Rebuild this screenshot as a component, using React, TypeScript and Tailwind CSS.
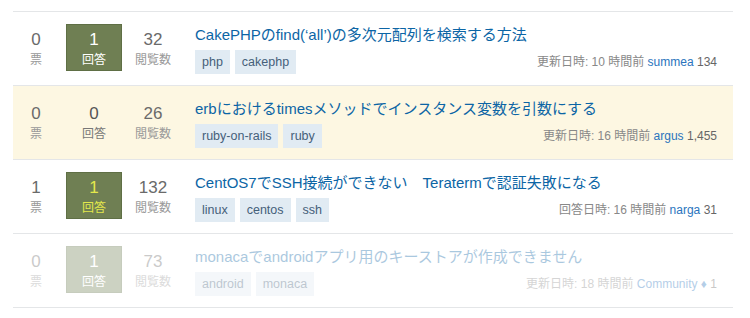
import React from "react";

type Question = {
  votes: number;
  answers: number;
  accepted: boolean;
  views: number;
  title: string;
  tags: string[];
  action: string;
  ago: string;
  user: string;
  mod?: boolean;
  rep: string;
  highlight?: boolean;
  faded?: boolean;
};

const questions: Question[] = [
  {
    votes: 0,
    answers: 1,
    accepted: false,
    views: 32,
    title: "CakePHPのfind(‘all’)の多次元配列を検索する方法",
    tags: ["php", "cakephp"],
    action: "更新日時",
    ago: "10 時間前",
    user: "summea",
    rep: "134",
  },
  {
    votes: 0,
    answers: 0,
    accepted: false,
    views: 26,
    title: "erbにおけるtimesメソッドでインスタンス変数を引数にする",
    tags: ["ruby-on-rails", "ruby"],
    action: "更新日時",
    ago: "16 時間前",
    user: "argus",
    rep: "1,455",
    highlight: true,
  },
  {
    votes: 1,
    answers: 1,
    accepted: true,
    views: 132,
    title: "CentOS7でSSH接続ができない　Teratermで認証失敗になる",
    tags: ["linux", "centos", "ssh"],
    action: "回答日時",
    ago: "16 時間前",
    user: "narga",
    rep: "31",
  },
  {
    votes: 0,
    answers: 1,
    accepted: false,
    views: 73,
    title: "monacaでandroidアプリ用のキーストアが作成できません",
    tags: ["android", "monaca"],
    action: "更新日時",
    ago: "18 時間前",
    user: "Community",
    mod: true,
    rep: "1",
    faded: true,
  },
];

function Stat({ value, label }: { value: number; label: string }) {
  return (
    <div className="flex flex-col items-center">
      <span className="text-[17px] leading-[20px] text-[#6a6a6a]">{value}</span>
      <span className="mt-[3px] text-[12px] leading-[14px] text-[#999]">{label}</span>
    </div>
  );
}

function QuestionRow({ q }: { q: Question }) {
  return (
    <div
      className={`flex h-[74px] border-b border-[#e4e6e8] ${
        q.highlight ? "bg-[#fdf7e2]" : "bg-white"
      }`}
    >
      <div className={`flex w-full pt-[12px] ${q.faded ? "opacity-[0.35]" : ""}`}>
        {/* stats */}
        <div className="flex w-[182px] shrink-0">
          <div className="flex w-[46px] justify-center pt-[6px]">
            <Stat value={q.votes} label="票" />
          </div>
          {q.answers > 0 ? (
            <div className="ml-[7px] flex h-[47px] w-[56px] flex-col items-center border border-[#5f6f45] bg-[#6f7f53] pt-[5px]">
              <span
                className={`text-[17px] leading-[20px] ${
                  q.accepted ? "text-[#e3e84c]" : "text-white"
                }`}
              >
                {q.answers}
              </span>
              <span
                className={`mt-[3px] text-[12px] leading-[14px] ${
                  q.accepted ? "text-[#e3e84c]" : "text-white"
                }`}
              >
                回答
              </span>
            </div>
          ) : (
            <div className="ml-[7px] flex h-[47px] w-[56px] flex-col items-center pt-[6px]">
              <span className="text-[17px] leading-[20px] text-[#555]">0</span>
              <span className="mt-[3px] text-[12px] leading-[14px] text-[#777]">回答</span>
            </div>
          )}
          <div className="flex w-[62px] justify-center pt-[6px]">
            <Stat value={q.views} label="閲覧数" />
          </div>
        </div>

        {/* summary */}
        <div className="flex flex-1 flex-col pr-[16px]">
          <a className="pt-[1px] text-[15px] leading-[20px] text-[#0c65a5]">{q.title}</a>
          <div className="mt-[5px] flex items-center justify-between">
            <div className="flex gap-[5px]">
              {q.tags.map((t) => (
                <span
                  key={t}
                  className="flex h-[24px] items-center bg-[#e1ebf3] px-[7px] text-[12.5px] text-[#45607a]"
                >
                  {t}
                </span>
              ))}
            </div>
            <div className="text-[12px] text-[#888]">
              {q.action}: {q.ago} <span className="text-[#2a74bd]">{q.user}</span>
              {q.mod && <span className="text-[#2a74bd]"> ♦</span>}{" "}
              <span className="text-[#666]">{q.rep}</span>
            </div>
          </div>
        </div>
      </div>
    </div>
  );
}

export default function App() {
  return (
    <div
      className="min-h-[318px] bg-white pt-[11px]"
      style={{ fontFamily: '"Liberation Sans", "Noto Sans CJK JP", sans-serif' }}
    >
      <div className="ml-[13px] w-[720px] border-t border-[#e4e6e8]">
        {questions.map((q) => (
          <QuestionRow key={q.title} q={q} />
        ))}
      </div>
    </div>
  );
}
